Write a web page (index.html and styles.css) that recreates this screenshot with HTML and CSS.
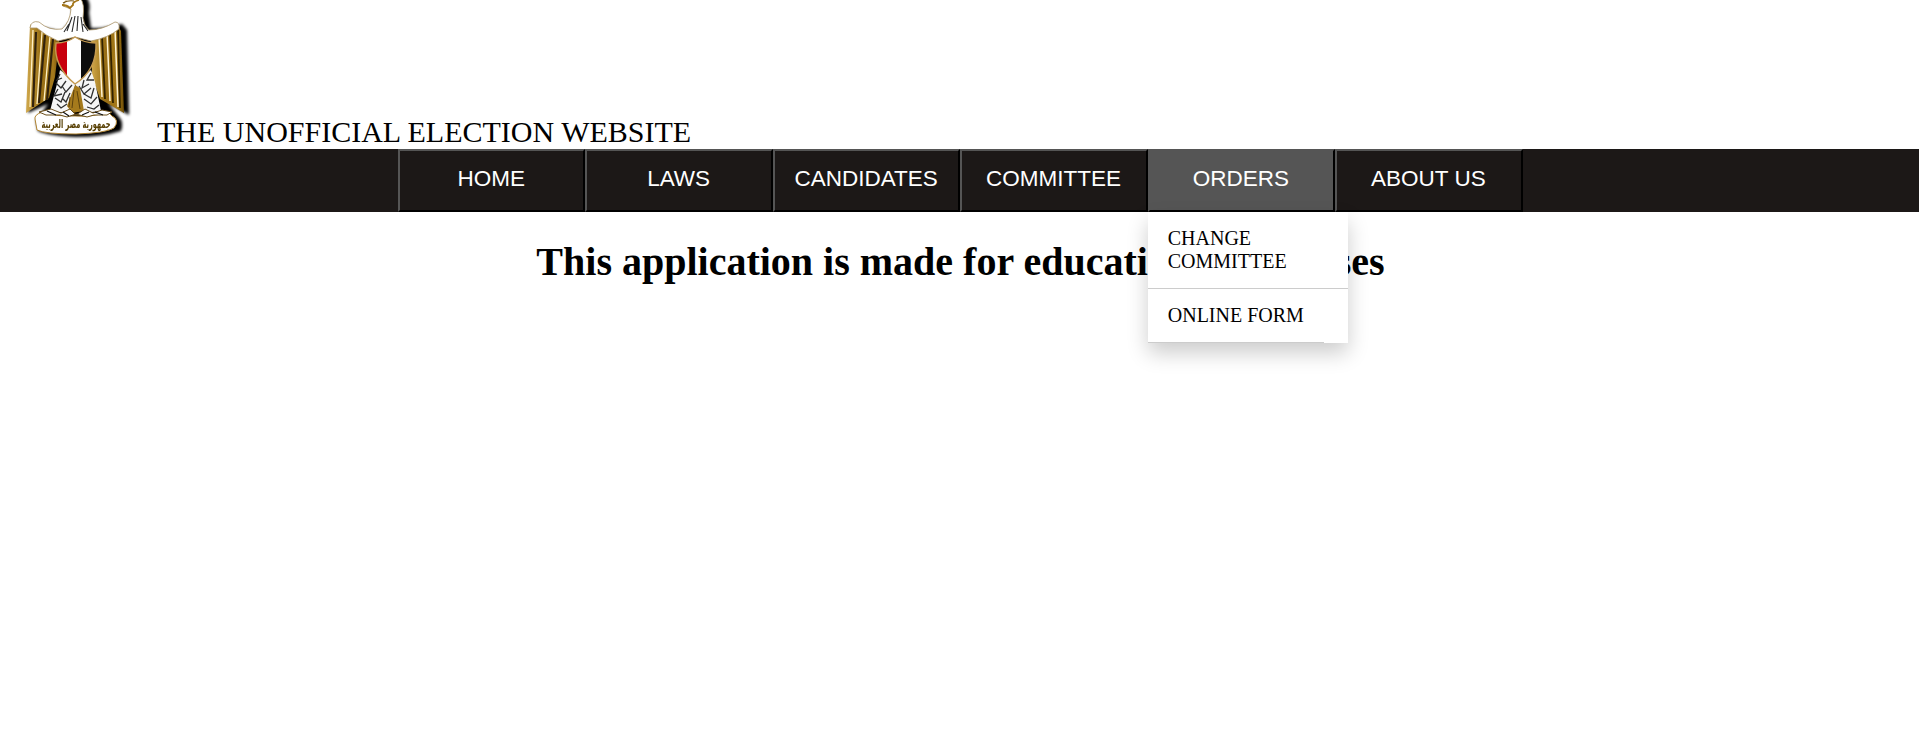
FILE: index.html
```html
<!DOCTYPE html>
<html lang="en">
<head>
<meta charset="utf-8">
<title>The Unofficial Election Website</title>
<link rel="stylesheet" href="styles.css">
</head>
<body>
<header class="header">
  <svg class="emblem" viewBox="0 0 157 149" role="img" aria-label="Eagle emblem">
    <defs>
      <linearGradient id="gold" x1="0" x2="1" y1="0" y2="0"><stop offset="0" stop-color="#d2aa4d"/><stop offset=".45" stop-color="#966c12"/><stop offset=".8" stop-color="#a57a1c"/><stop offset="1" stop-color="#6d4c05"/></linearGradient>
      <filter id="shade" x="-20%" y="-20%" width="150%" height="150%"><feGaussianBlur stdDeviation="1.7"/></filter>
      <filter id="soft"><feGaussianBlur stdDeviation=".45"/></filter>
      <clipPath id="shieldClip"><path d="M56 43Q67 43 75 37Q84 43 96 43Q97 70 75 84Q53 66 56 43Z"/></clipPath>
    </defs>
    <g filter="url(#shade)">
      <path d="M72-3H86Q91 2 89 13L91 28Q104 29 122 24L127 30L129 115L108 103L119 117Q124 122 121 131Q102 137 76 137Q50 136 38 131L36 120L48 104L28 113L34 27Q45 27 61 32L72 20Z"/>
    </g>
    <g filter="url(#soft)">
      <path d="M30 25Q34 21 42 27L60 34L55 77L49 98L26 113Z" fill="url(#gold)"/>
      <path d="M91 34L117 24L121 31L124 113L100 99L92 76Z" fill="url(#gold)"/>
      <path d="M36 32L33 107M45 35L39 103M53 39L47 100" stroke="#30230a" stroke-width="2.2"/>
      <path d="M33 30L30 107M42 32L37 104M50 36L44 101" stroke="#fff1c6" stroke-width="1.3"/>
      <path d="M102 36L105 99M110 33L113 103M118 29L120 108" stroke="#322300" stroke-width="1.8"/>
      <path d="M99 36L102 97M107 33L110 101M115 29L118 107" stroke="#fff4d4" stroke-width="1.5"/>
      <path d="M30 28Q31 20 39 22Q49 31 62 29Q70 22 71 9L63 6Q64 2 68-2L80-2Q85 3 83 18Q84 26 89 30Q102 30 115 22Q120 22 119 29Q108 38 91 41L75 37L58 41Q46 36 37 28Z" fill="#fff" stroke="#aa9367" stroke-width=".8"/>
      <path d="M62 5Q67 5 70 8L73 5Q72 2 79 0" fill="none" stroke="#a37519" stroke-width="1.8"/>
      <path d="M63 3Q68 0 74 1" fill="none" stroke="#75510a" stroke-width="1.2"/>
      <path d="M72 17L67 31M75 16L72 32M78 16L77 31M81 17L83 32M64 32L69 24M83 24L88 31" stroke="#292929" stroke-width="1.1"/>
      <path d="M60 70L58 80L50 111L68 113L76 82Z" fill="#f6f6f6"/>
      <path d="M91 70L95 82L101 111L83 113L75 83Z" fill="#f6f6f6"/>
      <path d="M60 74L57 80L62 78M66 81L61 88L56 83M72 85L66 92L62 86M58 89L54 96L62 94M65 92L61 102L55 98M70 93L66 102L62 98M57 104L61 108L67 104M91 73L87 80L94 80M84 80L82 88L89 84M79 86L84 94L91 88M94 88L91 98L84 94M84 99L91 104L97 97M87 107L94 109L99 105" fill="none" stroke="#303030" stroke-width="1.3"/>
      <path d="M75 85L67 106L72 113L84 111L80 88Z" fill="#a57a1e"/>
      <path d="M74 90L72 108M77 91L80 109M70 97L69 107" stroke="#5c410d" stroke-width="1"/>
      <g clip-path="url(#shieldClip)"><path d="M53 36H68V85H53Z" fill="#c8000c"/><path d="M67 36H82V87H67Z" fill="#fff"/><path d="M81 36H98V87H81Z" fill="#080808"/></g>
      <path d="M56 43Q67 43 75 37Q84 43 96 43Q97 70 75 84Q53 66 56 43Z" fill="none" stroke="#c49a51" stroke-width="1.4"/>
      <path d="M35 119Q34 115 42 112Q58 117 75 116Q94 117 108 112L112 116Q120 120 114 128Q106 133 76 134Q45 134 37 130Z" fill="#fff" stroke="#b08432"/>
      <path d="M39 112L51 109L61 113L70 109L76 115L85 109L93 113L102 110L112 112L107 115L94 115L87 117L76 114L67 117L60 115L46 115Z" fill="#fff" stroke="#6a4e1a"/>
      <path d="M47 111L56 115M63 112L69 116M82 115L89 112M95 112L103 115" stroke="#111" stroke-width="1.1"/>
      <text class="motto" x="76" y="128" text-anchor="middle" textLength="69" lengthAdjust="spacingAndGlyphs">جمهورية مصر العربية</text>
    </g>
  </svg>
  <span class="site-title">THE UNOFFICIAL ELECTION WEBSITE</span>
</header>
<nav class="nav">
  <button class="nav-button">HOME</button>
  <button class="nav-button">LAWS</button>
  <button class="nav-button">CANDIDATES</button>
  <button class="nav-button">COMMITTEE</button>
  <div class="dropdown">
    <button class="nav-button active">ORDERS</button>
    <div class="menu">
      <a class="menu-item">CHANGE COMMITTEE</a>
      <a class="menu-item last">ONLINE FORM</a>
    </div>
  </div>
  <button class="nav-button">ABOUT US</button>
</nav>
<h1 class="notice">This application is made for educational purposes</h1>
</body>
</html>
```
FILE: styles.css
```css
body { margin: 0; min-height: 754px; background: #fff; color: #000; font-family: "Liberation Serif", serif; }
.header { height: 149px; display: flex; align-items: flex-end; }
.emblem { width: 157px; height: 149px; flex: none; }
.motto { font: bold 12px "DejaVu Sans", sans-serif; fill: #584006; }
.site-title { font-size: 30px; line-height: 34px; }
.nav { display: flex; height: 63px; padding-left: 398px; background: #1c1817; }
.nav-button { box-sizing: border-box; display: block; width: 187.45px; height: 63px; margin: 0; padding: 0 1px 3px 0; border: 2px solid; border-color: #555 #000 #000 #555; background: #1c1817; color: #fff; font: 22.5px "Liberation Sans", sans-serif; }
.active { background: #555; }
.dropdown { position: relative; width: 187.45px; }
.menu { position: absolute; z-index: 1; left: 0; top: 63px; width: 200px; height: 131px; background: #fff; box-shadow: 0 10px 20px rgba(0,0,0,.2); }
.menu-item { display: block; padding: 15px 20px; border-bottom: 1px solid #ccc; font-size: 20px; line-height: 23px; }
.last { width: 136px; white-space: nowrap; }
.notice { margin: 27px 0 0; padding-left: 2px; text-align: center; font-size: 40px; line-height: 46px; }
```
